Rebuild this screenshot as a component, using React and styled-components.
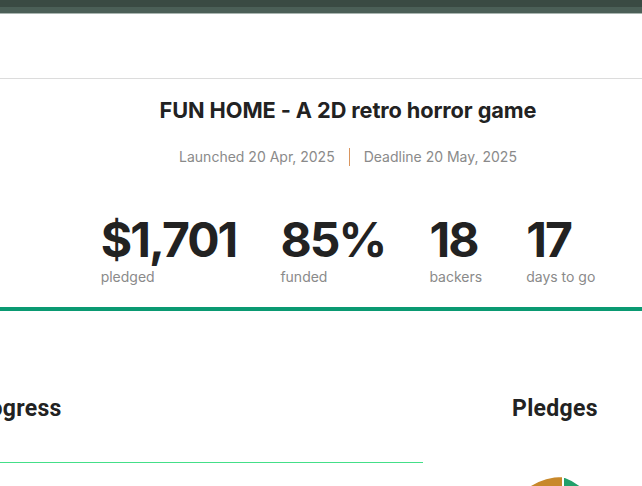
import React from "react";
import styled, { createGlobalStyle } from "styled-components";

const Global = createGlobalStyle`
  html, body { margin: 0; padding: 0; background: #fff; overflow: hidden; }
  body { font-family: Inter, "Noto Sans", sans-serif; color: #222; }
`;

const Page = styled.div`
  width: 642px;
  height: 486px;
  overflow: hidden;
`;

const TopBar = styled.div`
  height: 7px;
  background: #3a4a43;
  border-bottom: 6px solid #4b5f57;
  box-shadow: 0 1px 0 #a9b5b0;
`;

const Header = styled.header`
  height: 64px;
  margin-top: 1px;
  border-bottom: 1px solid #dcdcdc;
`;

const Main = styled.main`
  width: 760px;
  margin-left: -32px;
`;

const Hero = styled.section`
  display: flex;
  flex-direction: column;
  align-items: center;
  padding-top: 19px;
  padding-bottom: 20px;
`;

const Title = styled.h1`
  margin: 0;
  font-size: 21.75px;
  line-height: 25px;
  font-weight: 700;
  color: #222;
  letter-spacing: -0.1px;
`;

const Dates = styled.div`
  margin-top: 24px;
  display: flex;
  align-items: center;
  font-size: 14px;
  line-height: 20px;
  color: #8a8a8a;
`;

const Sep = styled.span`
  width: 1px;
  height: 18px;
  background: #d9955f;
  margin: 0 14px;
`;

const Stats = styled.div`
  margin-top: 49px;
  display: flex;
  gap: 44px;
`;

const Stat = styled.div`
  display: flex;
  flex-direction: column;
`;

const Num = styled.div`
  font-size: 48px;
  line-height: 48px;
  font-weight: 700;
  letter-spacing: -1.9px;
  color: #222;
`;

const Label = styled.div`
  margin-top: 3px;
  font-size: 14px;
  line-height: 20px;
  color: #8a8a8a;
`;

const Bar = styled.div`
  height: 4px;
  background: #0a9a72;
`;

const Lower = styled.section`
  display: grid;
  grid-template-columns: 455px 150px;
  column-gap: 65px;
  padding-top: 85px;
`;

const Column = styled.div`
  display: flex;
  flex-direction: column;
  align-items: ${(p) => (p.$center ? "center" : "stretch")};
`;

const H2 = styled.h2`
  margin: 0;
  font-family: Roboto, "Liberation Sans", sans-serif;
  font-size: 23px;
  line-height: 25px;
  font-weight: 700;
  letter-spacing: 0.3px;
  color: #222;
  margin-left: ${(p) => p.$indent || 0}px;
  margin-right: ${(p) => p.$shift || 0}px;
`;

const ChartLine = styled.div`
  margin-top: 41px;
  height: 1px;
  background: #44df88;
`;

const Pie = styled.svg`
  margin-top: 53px;
  display: block;
`;

function PieChart() {
  const r = 62;
  const c = 64;
  const pt = (deg) => {
    const a = ((deg - 90) * Math.PI) / 180;
    return [c + r * Math.cos(a), c + r * Math.sin(a)];
  };
  const [x1, y1] = pt(0);
  const [x2, y2] = pt(200);
  return (
    <Pie width="128" height="128" viewBox="0 0 128 128">
      <path
        d={`M${c} ${c} L${x1} ${y1} A${r} ${r} 0 0 1 ${x2} ${y2} Z`}
        fill="#22a06b"
        stroke="#fff"
        strokeWidth="2"
      />
      <path
        d={`M${c} ${c} L${x2} ${y2} A${r} ${r} 0 0 1 ${x1} ${y1} Z`}
        fill="#c8882a"
        stroke="#fff"
        strokeWidth="2"
      />
    </Pie>
  );
}

const stats = [
  ["$1,701", "pledged"],
  ["85%", "funded"],
  ["18", "backers"],
  ["17", "days to go"],
];

export default function App() {
  return (
    <Page>
      <Global />
      <TopBar />
      <Header />
      <Main>
        <Hero>
          <Title>FUN HOME - A 2D retro horror game</Title>
          <Dates>
            <span>Launched 20 Apr, 2025</span>
            <Sep />
            <span>Deadline 20 May, 2025</span>
          </Dates>
          <Stats>
            {stats.map(([n, l]) => (
              <Stat key={l}>
                <Num>{n}</Num>
                <Label>{l}</Label>
              </Stat>
            ))}
          </Stats>
        </Hero>
        <Bar />
        <Lower>
          <Column>
            <H2 $indent={-2}>Progress</H2>
            <ChartLine />
          </Column>
          <Column $center>
            <H2 $shift={16}>Pledges</H2>
            <PieChart />
          </Column>
        </Lower>
      </Main>
    </Page>
  );
}
